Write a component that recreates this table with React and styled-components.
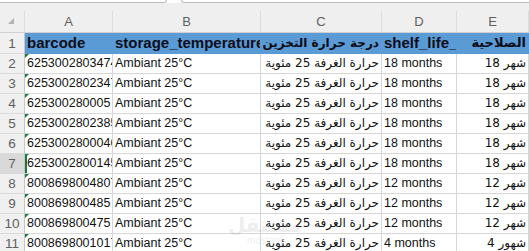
import styled, { createGlobalStyle, css } from "styled-components";

const GlobalStyle = createGlobalStyle`
  html, body {
    margin: 0;
    padding: 0;
    background: #ffffff;
    overflow: hidden;
  }
  body {
    font-family: "Liberation Sans", "DejaVu Sans", sans-serif;
  }
`;

const COLS = "25px 88px 148px 121px 75px 1fr";

// sheet rows
const rows = [
  { n: 2, code: "6253002803474", months: "18" },
  { n: 3, code: "6253002802347", months: "18" },
  { n: 4, code: "625300280005", months: "18" },
  { n: 5, code: "6253002802385", months: "18" },
  { n: 6, code: "6253002800046", months: "18" },
  { n: 7, code: "6253002800145", months: "18" },
  { n: 8, code: "8008698004807", months: "12" },
  { n: 9, code: "800869800485", months: "12" },
  { n: 10, code: "800869800475", months: "12" },
  { n: 11, code: "8008698001017", months: "4", plural: true },
];

const Page = styled.div`
  position: relative;
  width: 529px;
  height: 251px;
  overflow: hidden;
  background: #ffffff;
`;

const TopStrip = styled.div`
  display: flex;
  gap: 14px;
  height: 3px;
  background: #ffffff;
`;

const TopBox = styled.div`
  height: 2px;
  width: ${({ w }) => w};
  flex: ${({ grow }) => (grow ? 1 : "none")};
  border-bottom: 1px solid #bdbdbd;
  border-left: ${({ grow }) => (grow ? "1px solid #bdbdbd" : "none")};
  border-right: ${({ grow }) => (grow ? "none" : "1px solid #bdbdbd")};
  border-radius: ${({ grow }) => (grow ? "0 0 0 4px" : "0 0 4px 0")};
`;

const Letters = styled.div`
  display: grid;
  grid-template-columns: ${COLS};
  height: 29px;
  background: #efefef;
  border-bottom: 1px solid #d0d0d0;
`;

const Letter = styled.div`
  display: flex;
  align-items: center;
  justify-content: center;
  margin-top: 8px;
  border-right: 1px solid #dcdcdc;
  color: #5f5f5f;
  font-size: 13px;
`;

const Corner = styled.div`
  position: relative;
  margin-top: 8px;
  border-right: 1px solid #dcdcdc;
  &::after {
    content: "";
    position: absolute;
    left: 8px;
    top: 7px;
    border-style: solid;
    border-width: 0 0 6px 6px;
    border-color: transparent transparent #b4b4b4 transparent;
  }
`;

const Row = styled.div`
  display: grid;
  grid-template-columns: ${COLS};
  height: ${({ tall }) => (tall ? "21px" : "20px")};
`;

const RowNum = styled.div`
  display: flex;
  align-items: center;
  justify-content: center;
  background: ${({ active }) => (active ? "#d9d9d9" : "#f0f0f0")};
  color: #5f5f5f;
  font-size: 13.5px;
  border-right: 1px solid #c6c6c6;
  border-bottom: 1px solid #dadada;
`;

const Cell = styled.div`
  position: relative;
  box-sizing: border-box;
  padding: 0 2px;
  line-height: 19px;
  font-size: 12.5px;
  color: #111111;
  white-space: nowrap;
  overflow: hidden;
  text-overflow: clip;
  border-right: 1px solid #d6d6d6;
  border-bottom: 1px solid #d6d6d6;
  text-align: ${({ dir }) => (dir === "rtl" ? "right" : "left")};
  ${({ dir }) =>
    dir === "rtl" &&
    css`
      font-family: "DejaVu Sans", sans-serif;
      font-size: ${({ size }) => size || "12px"};
    `}
  ${({ head }) =>
    head &&
    css`
      background: #5b9bd5;
      font-weight: bold;
      line-height: 20px;
      border-right-color: #5b9bd5;
      border-bottom-color: #5b9bd5;
      color: #0d0d1a;
    `}
  ${({ head, dir }) =>
    head &&
    dir !== "rtl" &&
    css`
      font-size: 15px;
    `}
  ${({ flag }) =>
    flag &&
    css`
      &::before {
        content: "";
        position: absolute;
        left: 0;
        top: 0;
        border-style: solid;
        border-width: 4px 4px 0 0;
        border-color: #1e7b45 transparent transparent transparent;
      }
    `}
  ${({ active }) =>
    active &&
    css`
      box-shadow: inset 2px 0 0 #217346;
    `}
`;

const Watermark = styled.div`
  position: absolute;
  left: 228px;
  top: 214px;
  display: flex;
  flex-direction: column;
  align-items: center;
  color: rgba(150, 150, 150, 0.18);
  pointer-events: none;
`;

const WmArabic = styled.span`
  font-family: "DejaVu Sans", sans-serif;
  font-weight: bold;
  font-size: 20px;
  line-height: 22px;
`;

const WmLatin = styled.span`
  font-family: "Liberation Sans", sans-serif;
  font-size: 10px;
  line-height: 10px;
`;

export default function App() {
  return (
    <Page>
      <GlobalStyle />
      <TopStrip>
        <TopBox w="166px" />
        <TopBox grow />
      </TopStrip>

      <Letters>
        <Corner />
        {["A", "B", "C", "D", "E"].map((l) => (
          <Letter key={l}>{l}</Letter>
        ))}
      </Letters>

      <Row tall>
        <RowNum>1</RowNum>
        <Cell head>barcode</Cell>
        <Cell head>storage_temperature</Cell>
        <Cell head dir="rtl" size="12px">
          درجة حرارة التخزين
        </Cell>
        <Cell head>shelf_life_en</Cell>
        <Cell head dir="rtl" size="13px">
          الصلاحية
        </Cell>
      </Row>

      {rows.map((r) => (
        <Row key={r.n}>
          <RowNum active={r.n === 7}>{r.n}</RowNum>
          <Cell flag active={r.n === 7}>
            {r.code}
          </Cell>
          <Cell>Ambiant 25°C</Cell>
          <Cell dir="rtl">حرارة الغرفة 25 مئوية</Cell>
          <Cell>{r.months} months</Cell>
          <Cell dir="rtl">{`${r.plural ? "شهور" : "شهر"} ${r.months}`}</Cell>
        </Row>
      ))}

      <Watermark>
        <WmArabic>مستقل</WmArabic>
        <WmLatin>mostaql</WmLatin>
      </Watermark>
    </Page>
  );
}
